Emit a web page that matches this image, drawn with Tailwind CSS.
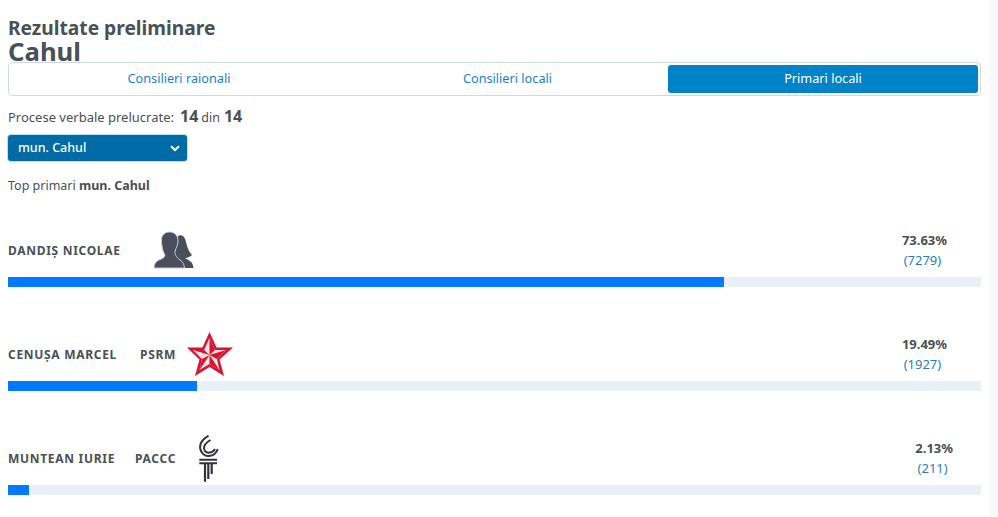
<!DOCTYPE html>
<html lang="ro">
<head>
<meta charset="UTF-8">
<title>Rezultate preliminare</title>
<script src="https://cdn.jsdelivr.net/npm/@tailwindcss/browser@4"></script>
</head>
<body class="bg-[#f8f9fa] overflow-hidden font-['Noto_Sans',sans-serif] text-[#495057]">
<div class="w-[989px] h-[517px] bg-white pl-2 pr-2 pt-[16px] overflow-hidden">
  <h1 class="text-[19.2px] font-bold leading-[24px] h-[24px]">Rezultate preliminare</h1>
  <h2 class="text-[25.700px] font-bold leading-[24px] h-[22px]">Cahul</h2>

  <div class="flex h-[34px] border border-[#ced9e6] rounded px-[2px] pt-[2px] pb-[2px] text-[12.700px]">
    <div class="w-[336px] flex items-center justify-center text-[#1a7fd4]">Consilieri raionali</div>
    <div class="w-[321px] flex items-center justify-center text-[#1a7fd4]">Consilieri locali</div>
    <div class="w-[310px] flex items-center justify-center text-white bg-[#0083c9] rounded-[3px]">Primari locali</div>
  </div>

  <div class="flex items-baseline h-[22px] mt-[9px] text-[13px] leading-[22px]">
    <span>Procese verbale prelucrate:</span>
    <b class="text-[16px] ml-[6px] mr-[3px]">14</b>
    <span class="text-[12.500px]">din</span>
    <b class="text-[16px] ml-[4px]">14</b>
  </div>

  <div class="flex items-center justify-between w-[179px] h-[26px] mt-[8px] pl-[10px] pr-[7px] bg-[#006ba6] text-white text-[12.500px] font-medium rounded-[3px] ring-1 ring-[#b8e2f8]">
    <span>mun. Cahul</span>
    <svg class="w-[10px] h-[7px]" viewBox="0 0 10 7" fill="none" stroke="#fff" stroke-width="2"><path d="M1 1.200 5 5 9 1.200"/></svg>
  </div>

  <p class="text-[12.500px] leading-[18px] mt-[16px]">Top primari <b>mun. Cahul</b></p>

  <!-- rand 1 -->
  <div class="mt-[32px] h-[104px]">
    <div class="flex items-center h-[50px] pb-[3px]">
      <span class="text-[12px] font-bold tracking-[0.7px] w-[146px]">DANDIŞ NICOLAE</span>
      <svg class="w-[41px] h-[39px]" viewBox="0 0 41 39" fill="#494d5c">
        <path d="M24 5C28 3 31 6 32 11 33 16 35 21 38 24 36 26 33 27 31 27 34 29 39 30 39.500 37H28L24 30 20 22 23 12z"/>
        <path stroke="#c6cbd6" d="M15.500 1C21 1 24 5 24 10 24 14 22 17 21 20 20.500 23 22 26 26 29 29 31 30 33 30.500 37H0C0 33 2 30 6 28.500 9 27.500 11 26 11 24 9 21 7.500 15 7.500 9 7.500 4 11 1 15.500 1z"/>
      </svg>
      <div class="ml-auto pr-[34px] text-center text-[13px] leading-[20px] -mt-[2px]">
        <div class="font-bold">73.63%</div>
        <div class="text-[#2a7fb8] pr-[4px]">(7279)</div>
      </div>
    </div>
    <div class="h-[10px] bg-[#e9f0f8]"><div class="h-full bg-[#007bff]" style="width:73.63%"></div></div>
  </div>

  <!-- rand 2 -->
  <div class="h-[104px]">
    <div class="flex items-center h-[50px] pb-[3px]">
      <span class="text-[12px] font-bold tracking-[0.7px] w-[132px]">CENUŞA MARCEL</span>
      <span class="text-[12px] font-bold tracking-[0.7px] w-[47px]">PSRM</span>
      <svg class="w-[46px] h-[45px]" viewBox="0 0 46 45">
        <path fill="#d9122f" d="M22.500 0 29.500 15.500H46L32.500 27.500 37 44 22.500 35 8 44 12.500 27.500 0 15.500H15.500z"/>
        <path fill="#fbe3e6" d="M22.500 6 28 18 39 18 30 27 32.500 38 22.500 32 12.500 38 15 27 6 18 17 18z"/>
        <path fill="#d9122f" d="M22.500 23 22.500 6 28 18zM22.500 23 39 18 30 27zM22.500 23 32.500 38 22.500 32zM22.500 23 12.500 38 15 27zM22.500 23 6 18 17 18z"/>
      </svg>
      <div class="ml-auto pr-[34px] text-center text-[13px] leading-[20px] -mt-[2px]">
        <div class="font-bold">19.49%</div>
        <div class="text-[#2a7fb8] pr-[4px]">(1927)</div>
      </div>
    </div>
    <div class="h-[10px] bg-[#e9f0f8]"><div class="h-full bg-[#007bff] w-[189px]"></div></div>
  </div>

  <!-- rand 3 -->
  <div class="h-[104px]">
    <div class="flex items-center h-[50px] pb-[3px]">
      <span class="text-[12px] font-bold tracking-[0.7px] w-[127px]">MUNTEAN IURIE</span>
      <span class="text-[12px] font-bold tracking-[0.7px] w-[62px]">PACCC</span>
      <svg class="w-[22px] h-[47px]" viewBox="0 0 22 47" fill="none" stroke="#333338">
        <path stroke-width="2" d="M11.500 .7C6 4 2.500 9 3.200 13.500 4 18.500 8 21.500 12 21 16 20.600 19.500 18 20.700 14"/>
        <path stroke-width="2" d="M13.500 5C9 7.500 6.800 10.500 7 13.500 7.300 16.500 10 18 12.500 17.600 15 17.300 17 16 18 14"/>
        <path stroke-width="2" d="M2.300 24.700H20M2.300 28.300H20"/>
        <path stroke-width="2.200" d="M8 29V46.700M11.300 29V44M14.700 29V39"/>
      </svg>
      <div class="ml-auto pr-[28px] text-center text-[13px] leading-[20px] -mt-[2px]">
        <div class="font-bold">2.13%</div>
        <div class="text-[#2a7fb8] pr-[3px]">(211)</div>
      </div>
    </div>
    <div class="h-[10px] bg-[#e9f0f8]"><div class="h-full bg-[#007bff]" style="width:2.13%"></div></div>
  </div>
</div>
</body>
</html>
